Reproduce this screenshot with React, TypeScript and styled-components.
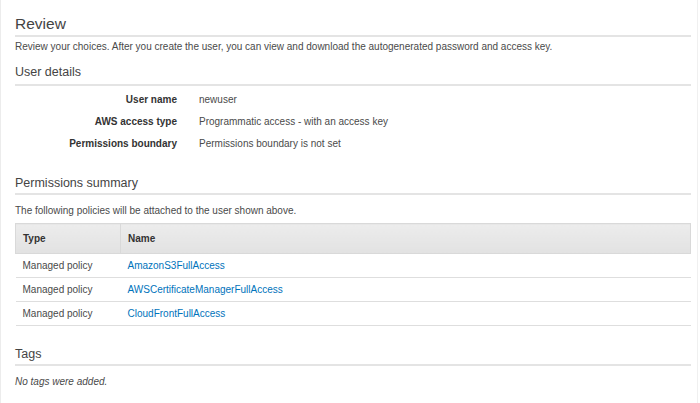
import styled, { createGlobalStyle } from "styled-components";

const GlobalStyle = createGlobalStyle`
  html, body {
    margin: 0;
    padding: 0;
    background: #fff;
  }
  body {
    font-family: "Liberation Sans", Arial, Helvetica, sans-serif;
    font-size: 10px;
    color: #444;
  }
`;

const policies = [
  { type: "Managed policy", name: "AmazonS3FullAccess" },
  { type: "Managed policy", name: "AWSCertificateManagerFullAccess" },
  { type: "Managed policy", name: "CloudFrontFullAccess" },
];

const details = [
  { label: "User name", value: "newuser" },
  { label: "AWS access type", value: "Programmatic access - with an access key" },
  { label: "Permissions boundary", value: "Permissions boundary is not set" },
];

export default function App() {
  return (
    <>
      <GlobalStyle />
      <Page>
        <SectionTitle $size={15.5} $top={15} $bottom={2}>
          Review
        </SectionTitle>
        <Note $top={3}>
          Review your choices. After you create the user, you can view and download the autogenerated password and
          access key.
        </Note>

        <SectionTitle $top={11} $bottom={4}>
          User details
        </SectionTitle>
        <DetailList>
          {details.map((d) => (
            <DetailRow key={d.label}>
              <DetailLabel>{d.label}</DetailLabel>
              <DetailValue>{d.value}</DetailValue>
            </DetailRow>
          ))}
        </DetailList>

        <SectionTitle $top={21} $bottom={2}>
          Permissions summary
        </SectionTitle>
        <Note $top={9}>The following policies will be attached to the user shown above.</Note>
        <PolicyTable>
          <thead>
            <tr>
              <HeadCell $width={105}>Type</HeadCell>
              <HeadCell>Name</HeadCell>
            </tr>
          </thead>
          <tbody>
            {policies.map((p) => (
              <tr key={p.name}>
                <Cell>{p.type}</Cell>
                <Cell>
                  <PolicyLink href="#">{p.name}</PolicyLink>
                </Cell>
              </tr>
            ))}
          </tbody>
        </PolicyTable>

        <SectionTitle $top={21} $bottom={2}>
          Tags
        </SectionTitle>
        <Note $top={9} $italic>
          No tags were added.
        </Note>
      </Page>
    </>
  );
}

const Page = styled.div`
  box-sizing: border-box;
  width: 698px;
  min-height: 403px;
  padding: 0 6px 0 14px;
  border-left: 1px solid #ececec;
  border-right: 1px solid #f0f0f0;
  display: flex;
  flex-direction: column;
`;

const SectionTitle = styled.h2<{ $size?: number; $top: number; $bottom: number }>`
  margin: ${(p) => p.$top}px 0 0;
  padding-bottom: ${(p) => p.$bottom}px;
  font-size: ${(p) => p.$size ?? 12.5}px;
  line-height: ${(p) => (p.$size ? 18 : 15)}px;
  font-weight: normal;
  color: #444;
  border-bottom: 2px solid #e4e4e4;
`;

const Note = styled.p<{ $top: number; $italic?: boolean }>`
  margin: ${(p) => p.$top}px 0 0;
  line-height: 14px;
  font-style: ${(p) => (p.$italic ? "italic" : "normal")};
  color: #4a4a4a;
`;

const DetailList = styled.div`
  margin-top: 3px;
  display: flex;
  flex-direction: column;
`;

const DetailRow = styled.div`
  display: grid;
  grid-template-columns: 162px 1fr;
  column-gap: 22px;
  line-height: 22px;
`;

const DetailLabel = styled.div`
  text-align: right;
  font-weight: bold;
  color: #333;
`;

const DetailValue = styled.div`
  color: #4a4a4a;
`;

const PolicyTable = styled.table`
  margin-top: 5px;
  width: 100%;
  border-collapse: collapse;
  font-size: 10px;
`;

const HeadCell = styled.th<{ $width?: number }>`
  width: ${(p) => (p.$width ? `${p.$width}px` : "auto")};
  box-sizing: border-box;
  height: 30px;
  padding: 0 7px;
  text-align: left;
  font-weight: bold;
  color: #333;
  background: linear-gradient(#ececec, #e2e2e2);
  border: 1px solid #d9d9d9;
`;

const Cell = styled.td`
  box-sizing: border-box;
  height: 24px;
  padding: 1px 7px 0;
  line-height: 14px;
  border-bottom: 1px solid #dedede;
  color: #4a4a4a;
`;

const PolicyLink = styled.a`
  color: #0073bb;
  text-decoration: none;
`;
